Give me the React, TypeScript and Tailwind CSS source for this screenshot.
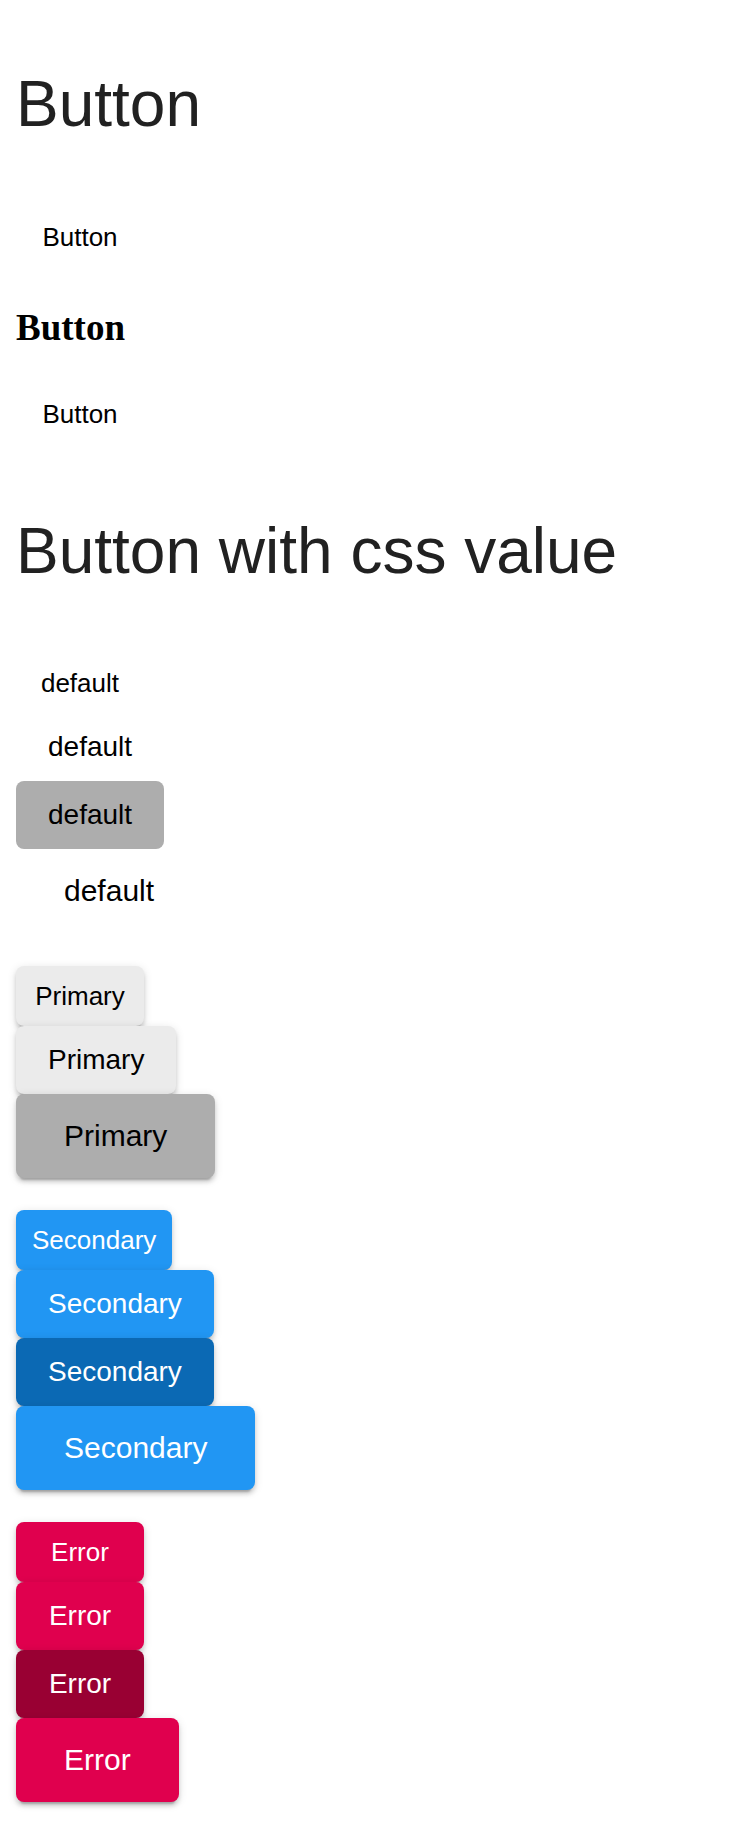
import React from 'react';

type Size = 'small' | 'medium' | 'large';

const sizeClass: Record<Size, string> = {
  small: 'h-[60px] px-[16px] text-[26px]',
  medium: 'h-[68px] px-[32px] text-[28px]',
  large: 'h-[84px] px-[48px] text-[30px]',
};

const raised =
  'shadow-[0_6px_2px_-4px_rgba(0,0,0,0.2),0_4px_4px_0_rgba(0,0,0,0.14),0_2px_10px_0_rgba(0,0,0,0.12)]';

function Btn({
  label,
  size = 'small',
  color = '',
}: {
  label: string;
  size?: Size;
  color?: string;
}) {
  return (
    <button
      className={`flex min-w-[128px] items-center justify-center rounded-[8px] leading-none ${sizeClass[size]} ${color}`}
    >
      {label}
    </button>
  );
}

export default function App() {
  const primary = `bg-[#ebebeb] text-black ${raised}`;
  const secondary = `bg-[#2196f3] text-white ${raised}`;
  const error = `bg-[#e0004e] text-white ${raised}`;

  return (
    <div className="flex min-h-[1834px] flex-col items-start bg-white px-4 pb-8 font-['Liberation_Sans',Arial,sans-serif] text-black">
      <h1 className="mt-[72px] text-[64px] leading-[64px] text-[#212121]">Button</h1>

      <div className="mt-[71px]">
        <Btn label="Button" />
      </div>
      <button className="mt-[42px] font-['Liberation_Serif','Times_New_Roman',serif] text-[37px] leading-[37px] font-bold">
        Button
      </button>
      <div className="mt-[38px]">
        <Btn label="Button" />
      </div>

      <h1 className="mt-[75px] text-[64px] leading-[64px] text-[#212121]">Button with css value</h1>

      <div className="mt-[70px] flex flex-col items-start">
        <Btn label="default" size="small" />
        <Btn label="default" size="medium" />
        <Btn label="default" size="medium" color="bg-[#adadad]" />
        <Btn label="default" size="large" />
      </div>

      <div className="mt-[33px] flex flex-col items-start">
        <Btn label="Primary" size="small" color={primary} />
        <Btn label="Primary" size="medium" color={primary} />
        <Btn label="Primary" size="large" color={`bg-[#adadad] text-black ${raised}`} />
      </div>

      <div className="mt-[32px] flex flex-col items-start">
        <Btn label="Secondary" size="small" color={secondary} />
        <Btn label="Secondary" size="medium" color={secondary} />
        <Btn label="Secondary" size="medium" color={`bg-[#0b69b4] text-white ${raised}`} />
        <Btn label="Secondary" size="large" color={secondary} />
      </div>

      <div className="mt-[32px] flex flex-col items-start">
        <Btn label="Error" size="small" color={error} />
        <Btn label="Error" size="medium" color={error} />
        <Btn label="Error" size="medium" color={`bg-[#990033] text-white ${raised}`} />
        <Btn label="Error" size="large" color={error} />
      </div>
    </div>
  );
}
